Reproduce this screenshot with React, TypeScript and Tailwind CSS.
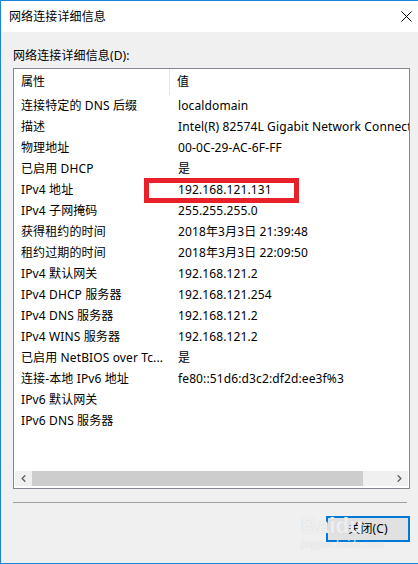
import { ChevronLeft, ChevronRight } from "lucide-react"

const rows: [string, string][] = [
  ["连接特定的 DNS 后缀", "localdomain"],
  ["描述", "Intel(R) 82574L Gigabit Network Connection"],
  ["物理地址", "00-0C-29-AC-6F-FF"],
  ["已启用 DHCP", "是"],
  ["IPv4 地址", "192.168.121.131"],
  ["IPv4 子网掩码", "255.255.255.0"],
  ["获得租约的时间", "2018年3月3日 21:39:48"],
  ["租约过期的时间", "2018年3月3日 22:09:50"],
  ["IPv4 默认网关", "192.168.121.2"],
  ["IPv4 DHCP 服务器", "192.168.121.254"],
  ["IPv4 DNS 服务器", "192.168.121.2"],
  ["IPv4 WINS 服务器", "192.168.121.2"],
  ["已启用 NetBIOS over Tc...", "是"],
  ["连接-本地 IPv6 地址", "fe80::51d6:d3c2:df2d:ee3f%3"],
  ["IPv6 默认网关", ""],
  ["IPv6 DNS 服务器", ""],
]

export default function App() {
  return (
    <div className="relative w-[418px] h-[564px] overflow-hidden bg-[#f0f0f0] border-t border-l border-b border-[#1883d7] text-[12px] tracking-[0.12px] text-black font-['Noto_Sans','Noto_Sans_CJK_SC',sans-serif]">
      {/* title bar */}
      <div className="h-[31px] bg-white flex items-center justify-between pl-2 pr-[6px]">
        <span>网络连接详细信息</span>
        <svg width="11" height="11" viewBox="0 0 11 11" className="text-black">
          <path d="M0.5 0.5 L10.5 10.5 M10.5 0.5 L0.5 10.5" stroke="currentColor" strokeWidth="1" />
        </svg>
      </div>

      <div className="pl-3 pr-2">
        <div className="mt-4 h-4 leading-4">网络连接详细信息(D):</div>

        {/* list view */}
        <div className="mt-1 h-[421px] border border-[#828790] bg-white flex flex-col">
          <div className="h-[26px] flex items-center shrink-0">
            <div className="w-[156px] h-full pl-[7px] flex items-center border-r border-[#e5e5e5]">属性</div>
            <div className="pl-[7px]">值</div>
          </div>
          {rows.map(([k, v]) => (
            <div key={k} className="h-[21px] flex items-center shrink-0 whitespace-nowrap">
              <div className="w-[156px] pl-[7px] overflow-hidden">{k}</div>
              <div className="pl-2 overflow-hidden flex-1">{v}</div>
            </div>
          ))}

          {/* horizontal scrollbar */}
          <div className="mt-auto mx-px mb-[2px] h-[15px] flex bg-[#f0f0f0]">
            <div className="w-[17px] flex items-center justify-center text-[#606060]">
              <ChevronLeft size={11} strokeWidth={3} />
            </div>
            <div className="w-[331px] bg-[#cdcdcd]" />
            <div className="flex-1" />
            <div className="w-[17px] flex items-center justify-center text-[#606060]">
              <ChevronRight size={11} strokeWidth={3} />
            </div>
          </div>
        </div>

        <div className="mt-[13px] mr-[3px] h-px bg-[#a0a0a0]" />

        <div className="mt-[13px] flex justify-end">
          <button className="w-[84px] h-[26px] border-2 border-[#0078d7] bg-[#e1e1e1] flex items-center justify-center">
            关闭(C)
          </button>
        </div>
      </div>

      {/* red highlight */}
      <div className="absolute left-[143px] top-[177px] w-[155px] h-[25px] border-[5px] border-[#e8202a]" />

      {/* watermark */}
      <div className="absolute left-[300px] top-[512px] flex flex-col items-start text-white/70 pointer-events-none">
        <span className="text-[22px] font-bold leading-[26px] font-['Liberation_Sans',sans-serif] [text-shadow:0_0_1px_#c8c8c8]">Baidu</span>
        <span className="text-[10px] leading-[12px] font-['Liberation_Sans',sans-serif] [text-shadow:0_0_1px_#c8c8c8]">jingyan.baidu.com</span>
      </div>
    </div>
  )
}
